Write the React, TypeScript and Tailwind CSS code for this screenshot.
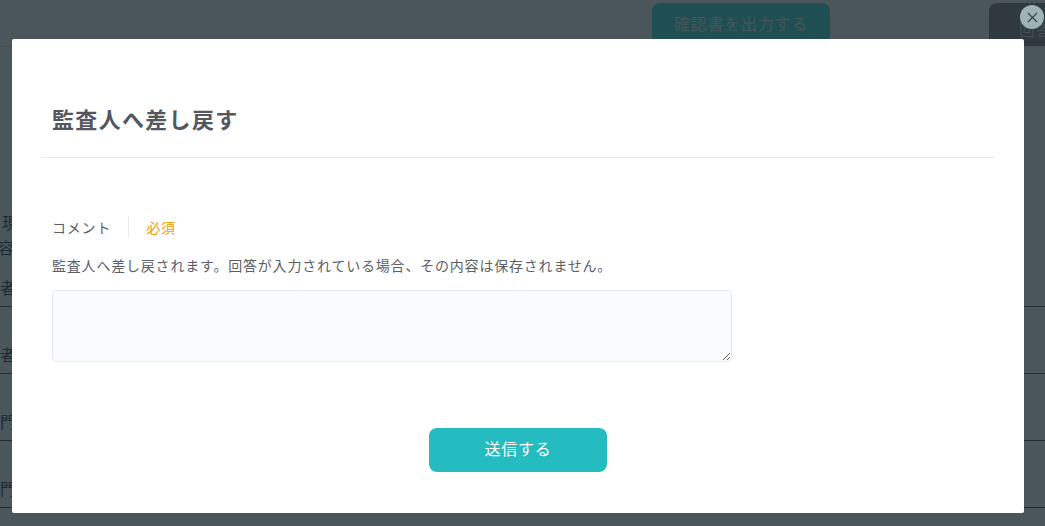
import { X } from "lucide-react";

const fontClass = "font-['Noto_Sans_CJK_JP','Noto_Sans',sans-serif] tracking-[0.05em]";

const rows = [
  { id: 1, label: "者" },
  { id: 2, label: "者" },
  { id: 3, label: "門" },
  { id: 4, label: "門" },
];

function PageBehind() {
  return (
    <div className="h-full w-full">
      <div className="h-[3px]" />
      <div className="flex h-[44px] justify-end border-b border-[#454f54]">
        <div className="mr-[159px] flex h-[43px] w-[178px] justify-center whitespace-nowrap rounded-t-lg bg-[#1f4f52] pt-[8px] text-base leading-6 text-[#44555a]">
          確認書を出力する
        </div>
        <div className="h-[43px] w-[56px] overflow-hidden whitespace-nowrap rounded-tl-lg bg-[#30393e] pl-[30px] pt-[14px] text-base leading-6 text-[#434f54]">
          回答
        </div>
      </div>
      <div className="h-[163px]" />
      <div className="h-[25px] pl-[2px] text-base leading-6 text-[#1d2a33]">現</div>
      <div className="-ml-[2px] h-[5px] text-base leading-6 text-[#1d2a33]">容</div>
      {rows.map((row) => (
        <div
          key={row.id}
          className="flex h-[67px] items-end border-b border-[#232c31] pb-[7px] text-base leading-6 text-[#1d2a33]"
        >
          {row.label}
        </div>
      ))}
    </div>
  );
}

function Modal() {
  return (
    <div className="absolute left-[12px] top-[39px] flex h-[474px] w-[1012px] flex-col rounded-[2px] bg-white px-[30px]">
      <div className="flex h-[119px] items-end border-b border-[#e6e8eb] pb-[23px] pl-[10px]">
        <h2 className="text-[22px] font-bold leading-8 tracking-[0.06em] text-[#54585e]">監査人へ差し戻す</h2>
      </div>
      <div className="pl-[10px] pt-[58px]">
        <div className="flex items-center">
          <span className="text-sm leading-5 text-[#5c6066]">コメント</span>
          <span className="mx-[17px] h-[21px] w-px bg-[#e6e8eb]" />
          <span className="text-sm leading-5 text-[#f59a00]">必須</span>
        </div>
        <p className="mt-[18px] text-sm leading-5 text-[#5c6066]">
          監査人へ差し戻されます。回答が入力されている場合、その内容は保存されません。
        </p>
        <textarea className="mt-[15px] block h-[72px] w-[680px] rounded border border-[#e6e8eb] bg-[#fafbfd]" />
      </div>
      <div className="mt-[66px] flex justify-center">
        <button className="h-[44px] w-[178px] rounded-lg bg-[#25bcc1] pb-[5px] text-base font-normal text-white">
          送信する
        </button>
      </div>
    </div>
  );
}

export default function App() {
  return (
    <div className={`relative h-[526px] w-[1045px] overflow-hidden bg-[#4b565b] ${fontClass}`}>
      <PageBehind />
      <Modal />
      <button className="absolute left-[1020px] top-[5px] flex h-[24px] w-[24px] items-center justify-center rounded-full bg-[#9eb3b5] text-[#33404a]">
        <X size={17} strokeWidth={1.5} />
      </button>
    </div>
  );
}
